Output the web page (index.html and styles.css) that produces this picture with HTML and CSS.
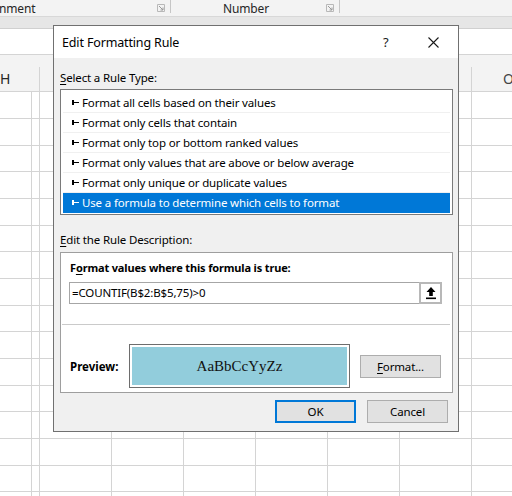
FILE: index.html
```html
<!DOCTYPE html>
<html>
<head>
<meta charset="utf-8">
<link rel="stylesheet" href="styles.css">
</head>
<body>
<div class="app">
  <div class="ribbon">
    <div class="group g-align"><span class="glabel">nment</span><svg class="launcher" width="8" height="8" viewBox="0 0 8 8"><path d="M0.5 7.5V0.5H7.5V7.5Z" fill="none" stroke="#b8b8b8"/><path d="M2 2L6 6M6 3.5V6H3.5" fill="none" stroke="#9a9a9a"/></svg></div>
    <div class="group g-num"><span class="glabel">Number</span><svg class="launcher" width="8" height="8" viewBox="0 0 8 8"><path d="M0.5 7.5V0.5H7.5V7.5Z" fill="none" stroke="#b8b8b8"/><path d="M2 2L6 6M6 3.5V6H3.5" fill="none" stroke="#9a9a9a"/></svg></div>
  </div>
  <div class="band"></div>
  <div class="fbar"></div>
  <div class="colheads">
    <div class="ch ch-h">H</div>
    <div class="ch"></div><div class="ch"></div><div class="ch"></div><div class="ch"></div><div class="ch"></div><div class="ch"></div>
    <div class="ch ch-o">O</div>
  </div>
  <div class="grid"></div>

  <div class="dialog">
    <div class="titlebar">
      <span class="title">Edit Formatting Rule</span>
      <span class="help">?</span>
      <svg class="close" width="11" height="11" viewBox="0 0 11 11"><path d="M0.5 0.5L10.5 10.5M10.5 0.5L0.5 10.5" stroke="#1a1a1a" stroke-width="1.1"/></svg>
    </div>
    <div class="dbody">
      <div class="lbl"><u>S</u>elect a Rule Type:</div>
      <div class="listbox">
        <div class="item"><span class="bullet"></span>Format all cells based on their values</div>
        <div class="item"><span class="bullet"></span>Format only cells that contain</div>
        <div class="item"><span class="bullet"></span>Format only top or bottom ranked values</div>
        <div class="item"><span class="bullet"></span>Format only values that are above or below average</div>
        <div class="item"><span class="bullet"></span>Format only unique or duplicate values</div>
        <div class="item sel"><span class="bullet"></span>Use a formula to determine which cells to format</div>
      </div>
      <div class="lbl lbl2"><u>E</u>dit the Rule Description:</div>
      <div class="desc">
        <div class="blbl">F<u>o</u>rmat values where this formula is true:</div>
        <div class="input">
          <span class="ftext">=COUNTIF(B$2:B$5,75)&gt;0</span>
          <span class="refbtn"><svg width="14" height="14" viewBox="0 0 14 14"><path d="M7 1L2.5 6H5.2V10H8.8V6H11.5Z" fill="#000"/><rect x="2" y="11.5" width="10" height="1.6" fill="#000"/></svg></span>
        </div>
        <div class="sep"></div>
        <div class="prow">
          <span class="plbl">Preview:</span>
          <div class="pbox"><div class="pfill">AaBbCcYyZz</div></div>
          <div class="btn fbtn"><u>F</u>ormat...</div>
        </div>
      </div>
      <div class="actions">
        <div class="btn ok">OK</div>
        <div class="btn cancel">Cancel</div>
      </div>
    </div>
  </div>
</div>
</body>
</html>
```

FILE: styles.css
```css
html, body {
  margin: 0;
  padding: 0;
}
body {
  width: 512px;
  height: 496px;
  overflow: hidden;
  background: #ffffff;
  font-family: "Noto Sans", "Open Sans", sans-serif;
  font-size: 11.5px;
  letter-spacing: -0.15px;
  color: #000;
}
.app {
  position: relative;
  width: 512px;
  height: 496px;
  overflow: hidden;
}
.ribbon {
  height: 17px;
  background: #f3f3f3;
  border-bottom: 1px solid #d8d8d8;
  display: flex;
  box-sizing: border-box;
}
.group {
  position: relative;
  height: 13px;
  border-right: 1px solid #c6c6c6;
  display: flex;
  align-items: center;
  box-sizing: border-box;
}
.g-align {
  width: 171px;
}
.g-num {
  width: 169px;
  justify-content: center;
  padding-right: 18px;
}
.glabel {
  font-size: 12px;
  line-height: 13px;
  color: #262626;
  margin-top: 3px;
}
.g-align .glabel {
  margin-left: -1px;
}
.launcher {
  position: absolute;
  right: 5px;
  top: 4px;
}
.band {
  height: 12px;
  background: #e6e6e6;
  border-bottom: 1px solid #d0d0d0;
  box-sizing: border-box;
}
.fbar {
  height: 26px;
  background: #ffffff;
  border-bottom: 1px solid #d4d4d4;
  box-sizing: border-box;
}
.colheads {
  height: 37px;
  background: #f3f3f3;
  border-bottom: 1px solid #d4d4d4;
  display: flex;
  box-sizing: border-box;
  padding-top: 12px;
}
.ch {
  width: 72px;
  flex: none;
  border-right: 1px solid #d4d4d4;
  box-sizing: border-box;
  text-align: center;
  font-size: 14px;
  line-height: 24px;
  color: #262626;
  letter-spacing: 0;
}
.ch-h {
  width: 40px;
  text-align: left;
}
.ch-o {
  border-right: none;
  text-align: left;
  padding-left: 31px;
  color: #444;
}
.grid {
  height: 404px;
  background-color: #ffffff;
  background-image:
    linear-gradient(to right, transparent 39px, #d4d4d4 39px, #d4d4d4 40px, transparent 40px),
    repeating-linear-gradient(to right, transparent 0, transparent 71px, #d4d4d4 71px, #d4d4d4 72px),
    linear-gradient(to bottom, transparent 26px, #d4d4d4 26px, #d4d4d4 27px, transparent 27px, transparent 53px, #d4d4d4 53px, #d4d4d4 54px, transparent 54px, transparent 79px, #d4d4d4 79px, #d4d4d4 80px);
  background-size: auto, auto, 100% 80px;
  background-repeat: no-repeat, repeat, repeat;
  background-position: 0 0, 40px 0, 0 0;
}

/* Dialog */
.dialog {
  position: absolute;
  left: 53px;
  top: 25px;
  width: 406px;
  height: 407px;
  box-sizing: border-box;
  border: 1px solid #707070;
  background: #f0f0f0;
  display: flex;
  flex-direction: column;
}
.titlebar {
  height: 32px;
  background: #ffffff;
  display: flex;
  align-items: center;
  position: relative;
  flex: none;
}
.title {
  margin-left: 8px;
  font-size: 12.5px;
  color: #000;
  margin-top: 1px;
}
.help {
  position: absolute;
  left: 329px;
  top: 7px;
  font-size: 13px;
  color: #1a1a1a;
}
.close {
  position: absolute;
  left: 374px;
  top: 11px;
}
.dbody {
  padding: 12px 5px 0 6px;
  display: flex;
  flex-direction: column;
}
.lbl {
  line-height: 16px;
  height: 16px;
  white-space: nowrap;
  color: #000;
}
.lbl u, .blbl u, .btn u {
  text-decoration-thickness: 1px;
  text-underline-offset: 2px;
}
.listbox {
  margin-top: 3px;
  height: 126px;
  box-sizing: border-box;
  border: 1px solid #7a7a7a;
  background: #ffffff;
  padding: 3px 2px 1px 2px;
}
.item {
  height: 20px;
  line-height: 19px;
  box-sizing: border-box;
  border-bottom: 1px solid #f0f0f0;
  display: flex;
  align-items: center;
  white-space: nowrap;
  overflow: hidden;
  padding-left: 9px;
}
.item.sel {
  background: #0078d7;
  color: #ffffff;
  border-bottom-color: #0078d7;
}
.bullet {
  position: relative;
  width: 7px;
  height: 5px;
  margin-right: 3px;
  flex: none;
}
.bullet::before {
  content: "";
  position: absolute;
  left: 0;
  top: 0;
  width: 2px;
  height: 5px;
  background: currentColor;
}
.bullet::after {
  content: "";
  position: absolute;
  left: 0;
  top: 2px;
  width: 7px;
  height: 1px;
  background: currentColor;
}
.lbl2 {
  margin-top: 17px;
}
.desc {
  margin-top: 4px;
  height: 141px;
  box-sizing: border-box;
  border: 1px solid #9e9e9e;
  background: #ffffff;
  padding: 7px 0 0 0;
  display: flex;
  flex-direction: column;
}
.blbl {
  font-weight: bold;
  font-size: 11px;
  letter-spacing: -0.15px;
  line-height: 16px;
  height: 16px;
  margin-left: 9px;
  white-space: nowrap;
}
.input {
  margin: 6px 10px 0 8px;
  height: 22px;
  box-sizing: border-box;
  border: 1px solid #a6a6a6;
  display: flex;
  align-items: center;
  justify-content: space-between;
}
.ftext {
  margin-left: 2px;
  line-height: 18px;
}
.refbtn {
  width: 23px;
  height: 22px;
  margin-right: -1px;
  box-sizing: border-box;
  border: 2px solid #b8b8b8;
  background: #ffffff;
  display: flex;
  align-items: center;
  justify-content: center;
}
.sep {
  margin: 20px 2px 0 1px;
  height: 1px;
  background: #cacaca;
}
.prow {
  margin-top: 19px;
  display: flex;
  align-items: center;
  height: 44px;
}
.plbl {
  font-weight: bold;
  font-size: 11.5px;
  letter-spacing: 0;
  margin-left: 9px;
  width: 59px;
}
.pbox {
  width: 221px;
  height: 44px;
  box-sizing: border-box;
  border: 1px solid #6d6d6d;
  padding: 2px;
  background: #ffffff;
}
.pfill {
  height: 100%;
  background: #92cddc;
  display: flex;
  align-items: center;
  justify-content: center;
  font-family: "Liberation Serif", "Times New Roman", serif;
  font-size: 15px;
  letter-spacing: 0;
  color: #111;
}
.btn {
  width: 81px;
  height: 23px;
  box-sizing: border-box;
  border: 1px solid #adadad;
  background: #e1e1e1;
  display: flex;
  align-items: center;
  justify-content: center;
  color: #000;
}
.fbtn {
  margin-left: 10px;
}
.actions {
  margin-top: 7px;
  display: flex;
  justify-content: flex-end;
  gap: 11px;
  padding-right: 5px;
}
.ok {
  border: 2px solid #0078d7;
}
```
